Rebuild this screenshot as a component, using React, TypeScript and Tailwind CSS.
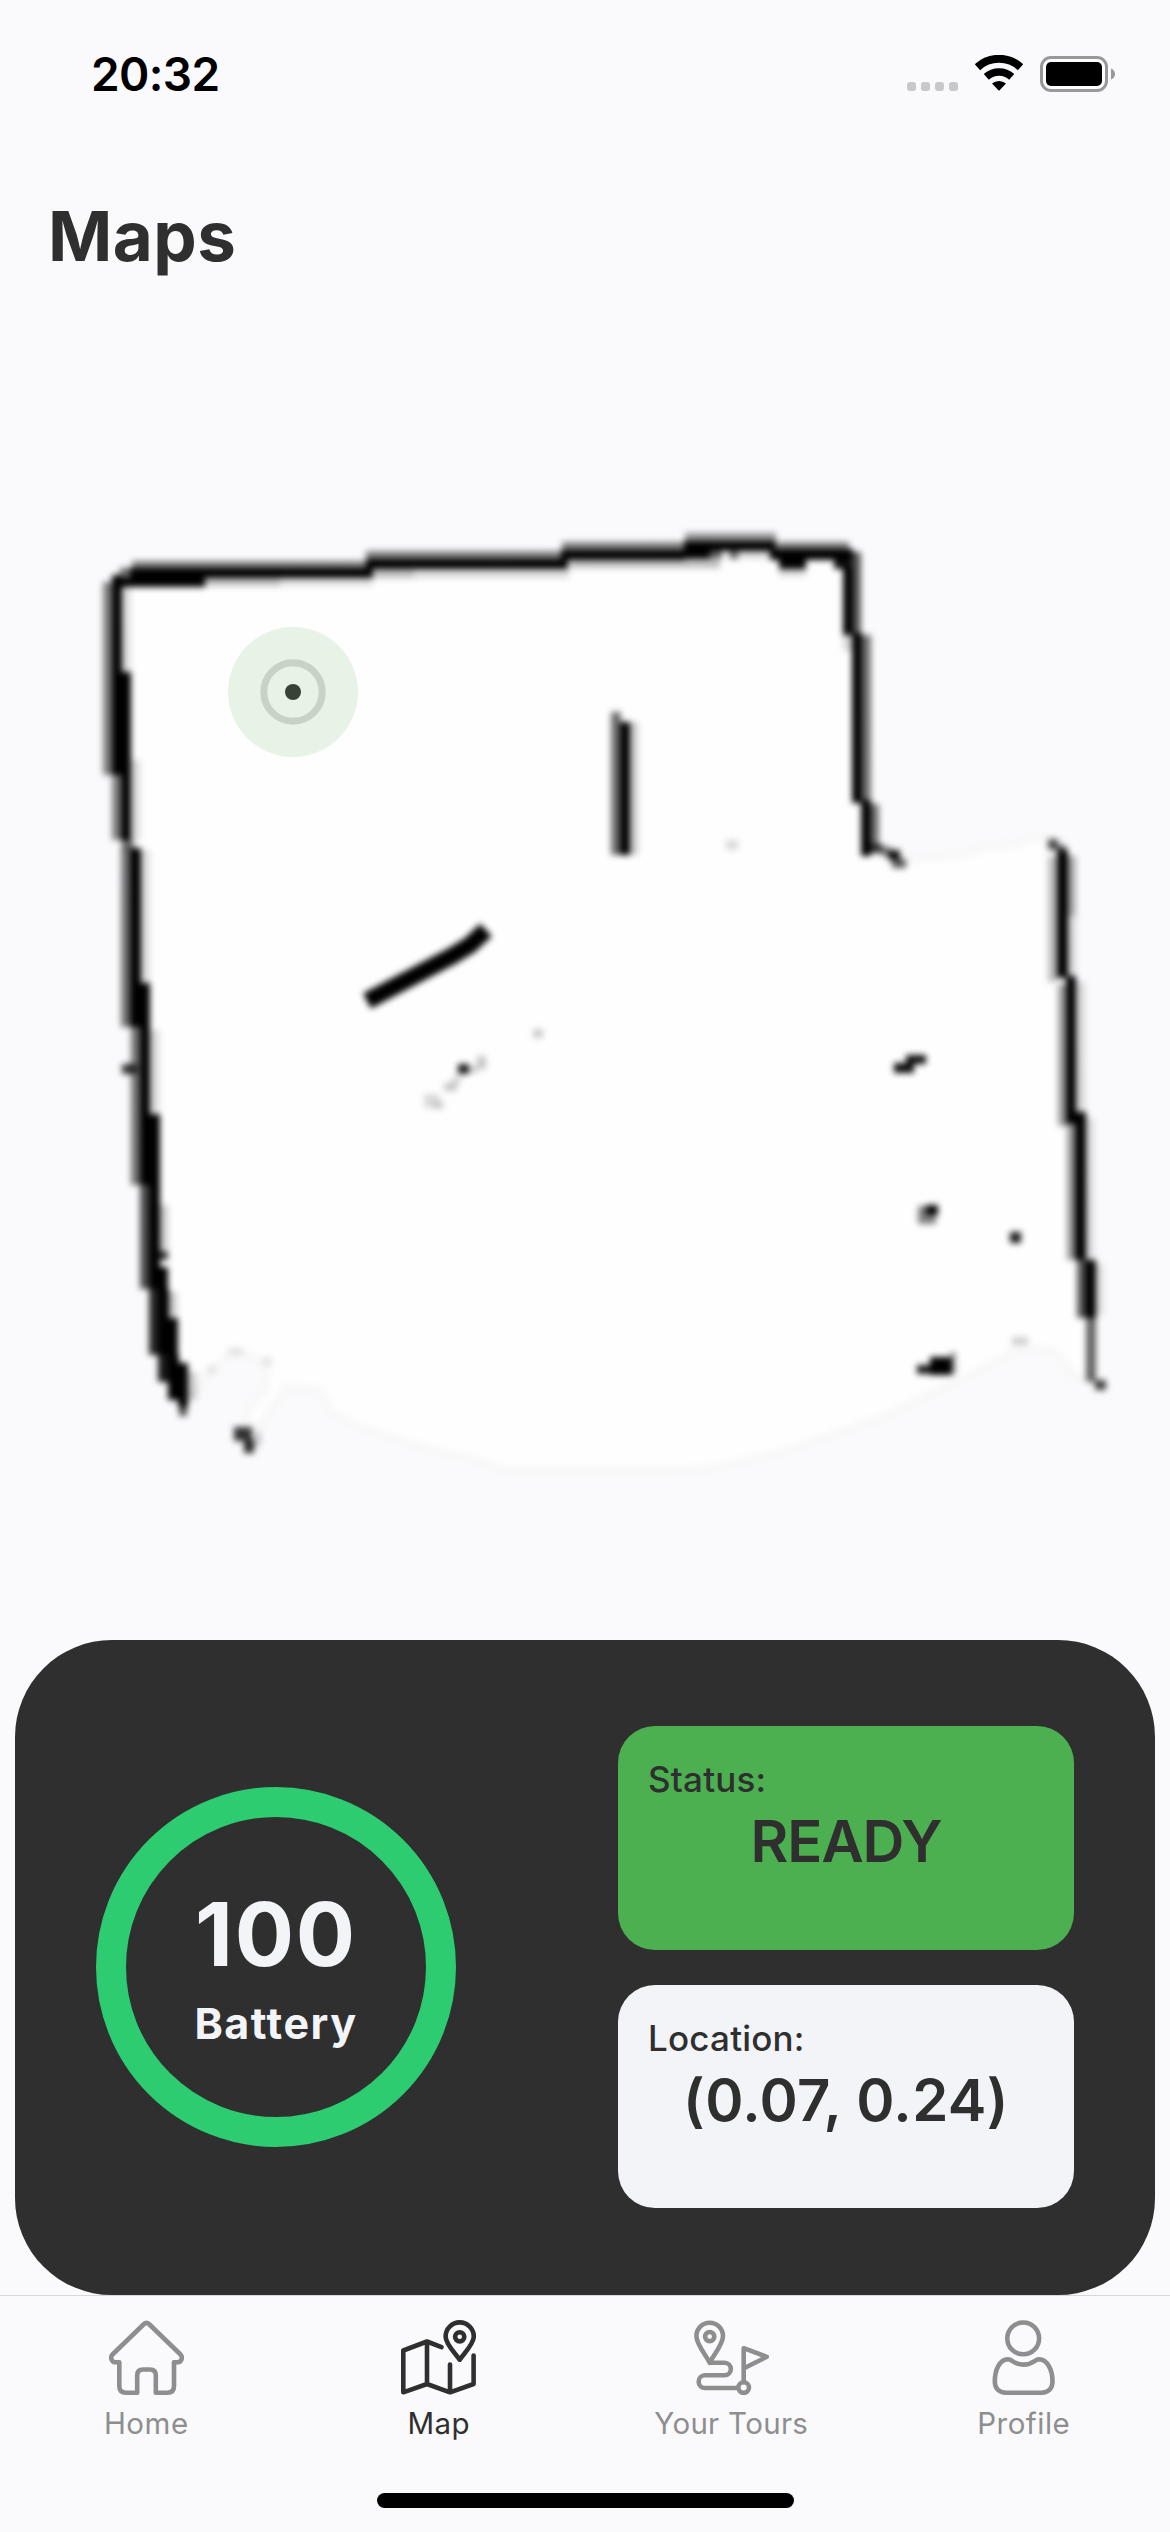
import type { ReactNode } from "react";

type Cell = [x: number, y: number, w: number, h: number, alpha: number];

// Occupied cells of the scanned floor: walls first, then small obstacles.
const cells: Cell[] = [
  // left wall
  [103, 582, 10, 193, 0.5], [112, 575, 10, 200, 1], [122, 586, 9, 86, 0.12], [121, 672, 10, 103, 1],
  [112, 775, 10, 65, 0.5], [121, 775, 10, 66, 1], [131, 760, 9, 80, 0.15], [122, 840, 12, 8, 0.5],
  [121, 846, 10, 181, 0.55], [130, 848, 11, 179, 1], [141, 850, 9, 134, 0.13], [140, 983, 10, 44, 1],
  [131, 1027, 10, 158, 0.55], [140, 1027, 10, 158, 1], [122, 1064, 15, 10, 0.8], [150, 1030, 9, 82, 0.15],
  [149, 1114, 11, 71, 1], [140, 1185, 10, 104, 0.7], [149, 1185, 11, 104, 1], [160, 1205, 8, 45, 0.2],
  [159, 1251, 9, 9, 0.8], [158, 1267, 10, 22, 1], [149, 1289, 10, 66, 0.85], [158, 1289, 11, 66, 1],
  [168, 1292, 9, 25, 0.2], [167, 1318, 11, 37, 1], [158, 1355, 11, 27, 0.9], [168, 1355, 11, 45, 1],
  [178, 1363, 10, 44, 1], [179, 1405, 8, 11, 0.7], [188, 1372, 9, 28, 0.18],
  // top wall
  [132, 561, 235, 8, 0.5], [120, 568, 12, 8, 0.6], [130, 568, 243, 10, 1], [112, 577, 93, 10, 1],
  [205, 578, 75, 8, 0.25], [280, 578, 93, 8, 0.12], [366, 551, 196, 9, 0.5], [366, 559, 202, 10, 1],
  [374, 569, 40, 9, 0.25], [414, 569, 155, 9, 0.14], [562, 542, 123, 9, 0.5], [561, 550, 124, 10, 1],
  [570, 560, 150, 8, 0.25], [685, 533, 91, 9, 0.42], [684, 541, 92, 10, 1], [684, 550, 26, 9, 1],
  [710, 550, 12, 9, 0.6], [729, 550, 10, 9, 0.55], [741, 551, 30, 8, 0.12], [777, 542, 72, 9, 0.5],
  [770, 549, 83, 11, 1], [779, 560, 27, 9, 1], [779, 569, 27, 7, 0.15], [834, 560, 18, 9, 0.95],
  // upper right wall
  [843, 566, 10, 69, 1], [852, 552, 9, 83, 0.65], [843, 635, 9, 16, 0.15], [852, 633, 10, 170, 1],
  [861, 635, 10, 168, 0.55], [861, 800, 10, 56, 1], [870, 804, 9, 42, 0.55], [870, 844, 12, 9, 0.8],
  [881, 846, 9, 10, 0.5], [888, 850, 12, 10, 0.95], [892, 859, 14, 9, 0.65],
  // lower right wall
  [1048, 839, 10, 11, 0.7], [1057, 845, 9, 10, 0.6], [1048, 856, 9, 126, 0.25], [1057, 850, 11, 128, 1],
  [1067, 856, 9, 60, 0.32], [1067, 916, 9, 62, 0.14], [1058, 984, 9, 142, 0.38], [1066, 976, 10, 148, 1],
  [1076, 982, 9, 130, 0.14], [1067, 1124, 9, 136, 0.4], [1075, 1112, 11, 148, 1], [1086, 1118, 8, 142, 0.12],
  [1077, 1260, 9, 58, 0.65], [1085, 1260, 11, 58, 1], [1095, 1265, 9, 50, 0.1], [1086, 1318, 10, 64, 0.6],
  [1095, 1380, 11, 10, 0.75],
  // post and specks
  [611, 712, 10, 143, 0.58], [620, 722, 10, 133, 1], [629, 722, 9, 133, 0.2], [726, 840, 12, 10, 0.14],
  [906, 1055, 20, 9, 0.95], [894, 1063, 20, 10, 0.95], [926, 1205, 12, 10, 1], [918, 1206, 9, 18, 0.5],
  [927, 1215, 9, 9, 0.5], [1010, 1232, 11, 11, 0.9], [930, 1357, 22, 18, 1], [917, 1365, 14, 9, 0.9],
  [950, 1352, 6, 22, 0.35], [1012, 1337, 16, 8, 0.18], [458, 1064, 11, 10, 0.9], [470, 1066, 8, 7, 0.2],
  [477, 1056, 9, 13, 0.22], [452, 1076, 9, 8, 0.15], [444, 1083, 13, 8, 0.22], [424, 1094, 15, 14, 0.14],
  [434, 1101, 10, 8, 0.14], [533, 1029, 10, 9, 0.2], [234, 1427, 18, 14, 0.8], [244, 1440, 10, 13, 0.85],
  [254, 1432, 7, 14, 0.2], [228, 1348, 15, 7, 0.09], [207, 1366, 9, 8, 0.08], [263, 1357, 9, 9, 0.08],
];

const floorOutline =
  "M120 578L368 568L564 559L690 550L850 558L858 640L864 800L868 850L905 860L972 854L984 847L1018 845L1026 839L1046 838L1060 856L1070 980L1080 1120L1090 1262L1090 1376L1077 1378L1053 1350L1017 1348L983 1369L963 1378L923 1397L887 1415L833 1434L790 1450L745 1461L705 1469L640 1471H508L475 1459L440 1452L410 1443L382 1434L352 1424L334 1414L318 1389L285 1388L262 1424L246 1428L248 1410L266 1388L267 1362L236 1351L211 1369L190 1398L168 1350L145 1190L136 1020L126 800Z";

function FloorMap() {
  return (
    <svg className="block h-[1320px] w-full shrink-0" viewBox="0 320 1170 1320">
      <defs>
        <filter id="scan" x="0" y="320" width="1170" height="1320" filterUnits="userSpaceOnUse" colorInterpolationFilters="sRGB">
          <feGaussianBlur stdDeviation="3.3" />
        </filter>
      </defs>
      <g filter="url(#scan)">
        <path d={floorOutline} fill="#fefefe" stroke="#f6f6f6" strokeWidth="6" strokeLinejoin="round" />
        {cells.map(([x, y, w, h, alpha], i) => (
          <rect key={i} x={x} y={y} width={w} height={h} fillOpacity={alpha} />
        ))}
        <path d="M367 1001L384 992L418 974L452 956L470 945L486 930" fill="none" stroke="#000" strokeWidth="17" strokeLinejoin="round" />
      </g>
      <circle cx="293" cy="692" r="65" fill="#e8f3e8" />
      <circle cx="293" cy="692" r="29.2" fill="none" stroke="#c8d3c8" strokeWidth="7" />
      <circle cx="293" cy="692" r="8" fill="#374337" />
    </svg>
  );
}

function StatusBar() {
  return (
    <div className="flex h-[150px] shrink-0 items-start justify-between pl-[91px] pr-[54px] pt-[55px]">
      <span className="mt-[-1px] text-[46px] font-semibold leading-[40px] tracking-[-0.6px] text-black">20:32</span>
      <div className="flex items-start">
        <div className="mr-[17px] mt-[27px] flex gap-[5px]">
          {[0, 1, 2, 3].map((n) => (
            <div key={n} className="size-[9px] rounded-[3px] bg-[#c8c8ca]" />
          ))}
        </div>
        <svg className="mr-[17px] h-[36px] w-[48px]" viewBox="0 0 48 36">
          <path d="M2.4 12.2A32 32 0 0 1 45.6 12.2" fill="none" stroke="#000" strokeWidth="8" />
          <path d="M11.3 21.9A19 19 0 0 1 36.7 21.9" fill="none" stroke="#000" strokeWidth="7.6" />
          <path d="M17 28.6A10.5 10.5 0 0 1 31 28.6L24.6 35.3Q24 36 23.4 35.3Z" />
        </svg>
        <svg className="mt-px h-[36px] w-[76px]" viewBox="0 0 76 36">
          <rect x="1.5" y="1.5" width="65" height="33" rx="9.5" fill="#fff" stroke="#98989a" strokeWidth="3" />
          <rect x="6" y="6" width="56" height="24" rx="5" />
          <path d="M71 12.5Q75 14 75 18T71 23.5Z" fill="#98989a" />
        </svg>
      </div>
    </div>
  );
}

function InfoBox({ label, value, className, valueClass }: { label: string; value: string; className: string; valueClass: string }) {
  return (
    <div className={`flex w-[456px] flex-col rounded-[37px] px-[30px] pt-[31px] ${className}`}>
      <span className="text-[35px] font-medium leading-[44px] tracking-[0.2px]">{label}</span>
      <span className={`mt-[3px] whitespace-nowrap text-center text-[58px] font-semibold leading-[74px] ${valueClass}`}>{value}</span>
    </div>
  );
}

function RobotCard() {
  return (
    <div className="mx-[15px] flex h-[655px] shrink-0 items-center justify-between rounded-[97px] bg-[#2f2f2f] pb-[2px] pl-[81px] pr-[81px]">
      <div className="flex size-[360px] flex-col items-center justify-center rounded-full border-[30px] border-[#2ecc71] text-[#f3f4f8]">
        <span className="text-[88px] font-bold leading-[100px] tracking-[1.8px]">100</span>
        <span className="mt-[13px] text-[43px] font-bold leading-[52px] tracking-[1.5px]">Battery</span>
      </div>
      <div className="flex flex-col gap-[35px] text-[#2f2f2f]">
        <InfoBox label="Status:" value="READY" className="h-[224px] bg-[#4caf50]" valueClass="tracking-[-1px]" />
        <InfoBox label="Location:" value="(0.07, 0.24)" className="h-[223px] bg-[#f3f4f8]" valueClass="tracking-[0.4px]" />
      </div>
    </div>
  );
}

function Tab({ label, active, spacing, children }: { label: string; active?: boolean; spacing: string; children: ReactNode }) {
  return (
    <div className={`flex flex-col items-center pt-[24px] ${active ? "text-[#2f2f2f]" : "text-[#8e8e8f]"}`}>
      <svg className="size-[75px]" viewBox="0 0 75 75" fill="none" stroke="currentColor" strokeWidth="4.6" strokeLinecap="round" strokeLinejoin="round">
        {children}
      </svg>
      <span className={`mt-[10px] text-[29.5px] leading-[36px] ${spacing}`}>{label}</span>
    </div>
  );
}

function TabBar() {
  return (
    <nav className="grid h-[198px] shrink-0 grid-cols-4 border-t border-[#d8d8d9]">
      <Tab label="Home" spacing="tracking-[0.5px]">
        <path d="M10.3 42.3H7C2.5 42.3 .8 37.5 3.5 34.5L35 4Q37.5 1.6 40 4L71.5 34.5C74.2 37.5 72.5 42.3 68 42.3H65V66Q65 72.7 58.5 72.7H46.8V55.5Q46.8 49.5 41 49.5H34Q28.2 49.5 28.2 55.5V72.7H17Q10.3 72.7 10.3 66Z" />
      </Tab>
      <Tab label="Map" active spacing="tracking-[0.4px]">
        <path d="M40.5 27.2L26 21.5L2.3 30.5V72.3L26 64L49 72.3L72.6 64V35.5M26 21.5V64M49 44.5V72" />
        <path d="M58.7 39.7C55.5 34.5 44.6 24.5 44.6 16.5A14.1 14.1 0 0 1 72.8 16.5C72.8 24.5 61.9 34.5 58.7 39.7Z" />
        <circle cx="58.7" cy="16.8" r="4.6" />
      </Tab>
      <Tab label="Your Tours" spacing="tracking-[0.3px]">
        <path d="M15.7 42.8C12.5 36 2.4 24.5 2.4 16A13.3 13.3 0 0 1 29 16C29 24.5 18.9 36 15.7 42.8H30.6A6.2 6.2 0 0 1 30.6 55.3H11A6.35 6.35 0 0 0 11 68H43.5" />
        <circle cx="15.7" cy="16.6" r="4.6" />
        <circle cx="49.7" cy="67.6" r="5.3" />
        <path d="M49.7 62V28.2L72.8 36.8L50 48.2" />
      </Tab>
      <Tab label="Profile" spacing="tracking-[0.5px]">
        <circle cx="37.2" cy="18.4" r="15.9" />
        <path d="M22 39.3C13.5 39.5 8.8 50 8.8 61.5C8.8 68.5 13 72.7 20 72.7H55.5C62.5 72.7 66.5 68.5 66.5 61.5C66.5 50 61.5 39.5 53 39.3Q51 39.3 49 40.8Q37.5 48.5 26 40.8Q24 39.3 22 39.3Z" />
      </Tab>
    </nav>
  );
}

export default function App() {
  return (
    <div className="flex h-[2532px] w-[1170px] flex-col overflow-hidden bg-[#fafafc] font-['Inter',sans-serif]">
      <StatusBar />
      <h1 className="h-[170px] shrink-0 pl-[48px] pt-[41px] text-[69px] font-bold leading-[90px] tracking-[0.5px] text-[#2f2f2f]">Maps</h1>
      <FloorMap />
      <RobotCard />
      <TabBar />
      <div className="ml-[377px] h-[15px] w-[417px] shrink-0 rounded-full bg-black" />
    </div>
  );
}
